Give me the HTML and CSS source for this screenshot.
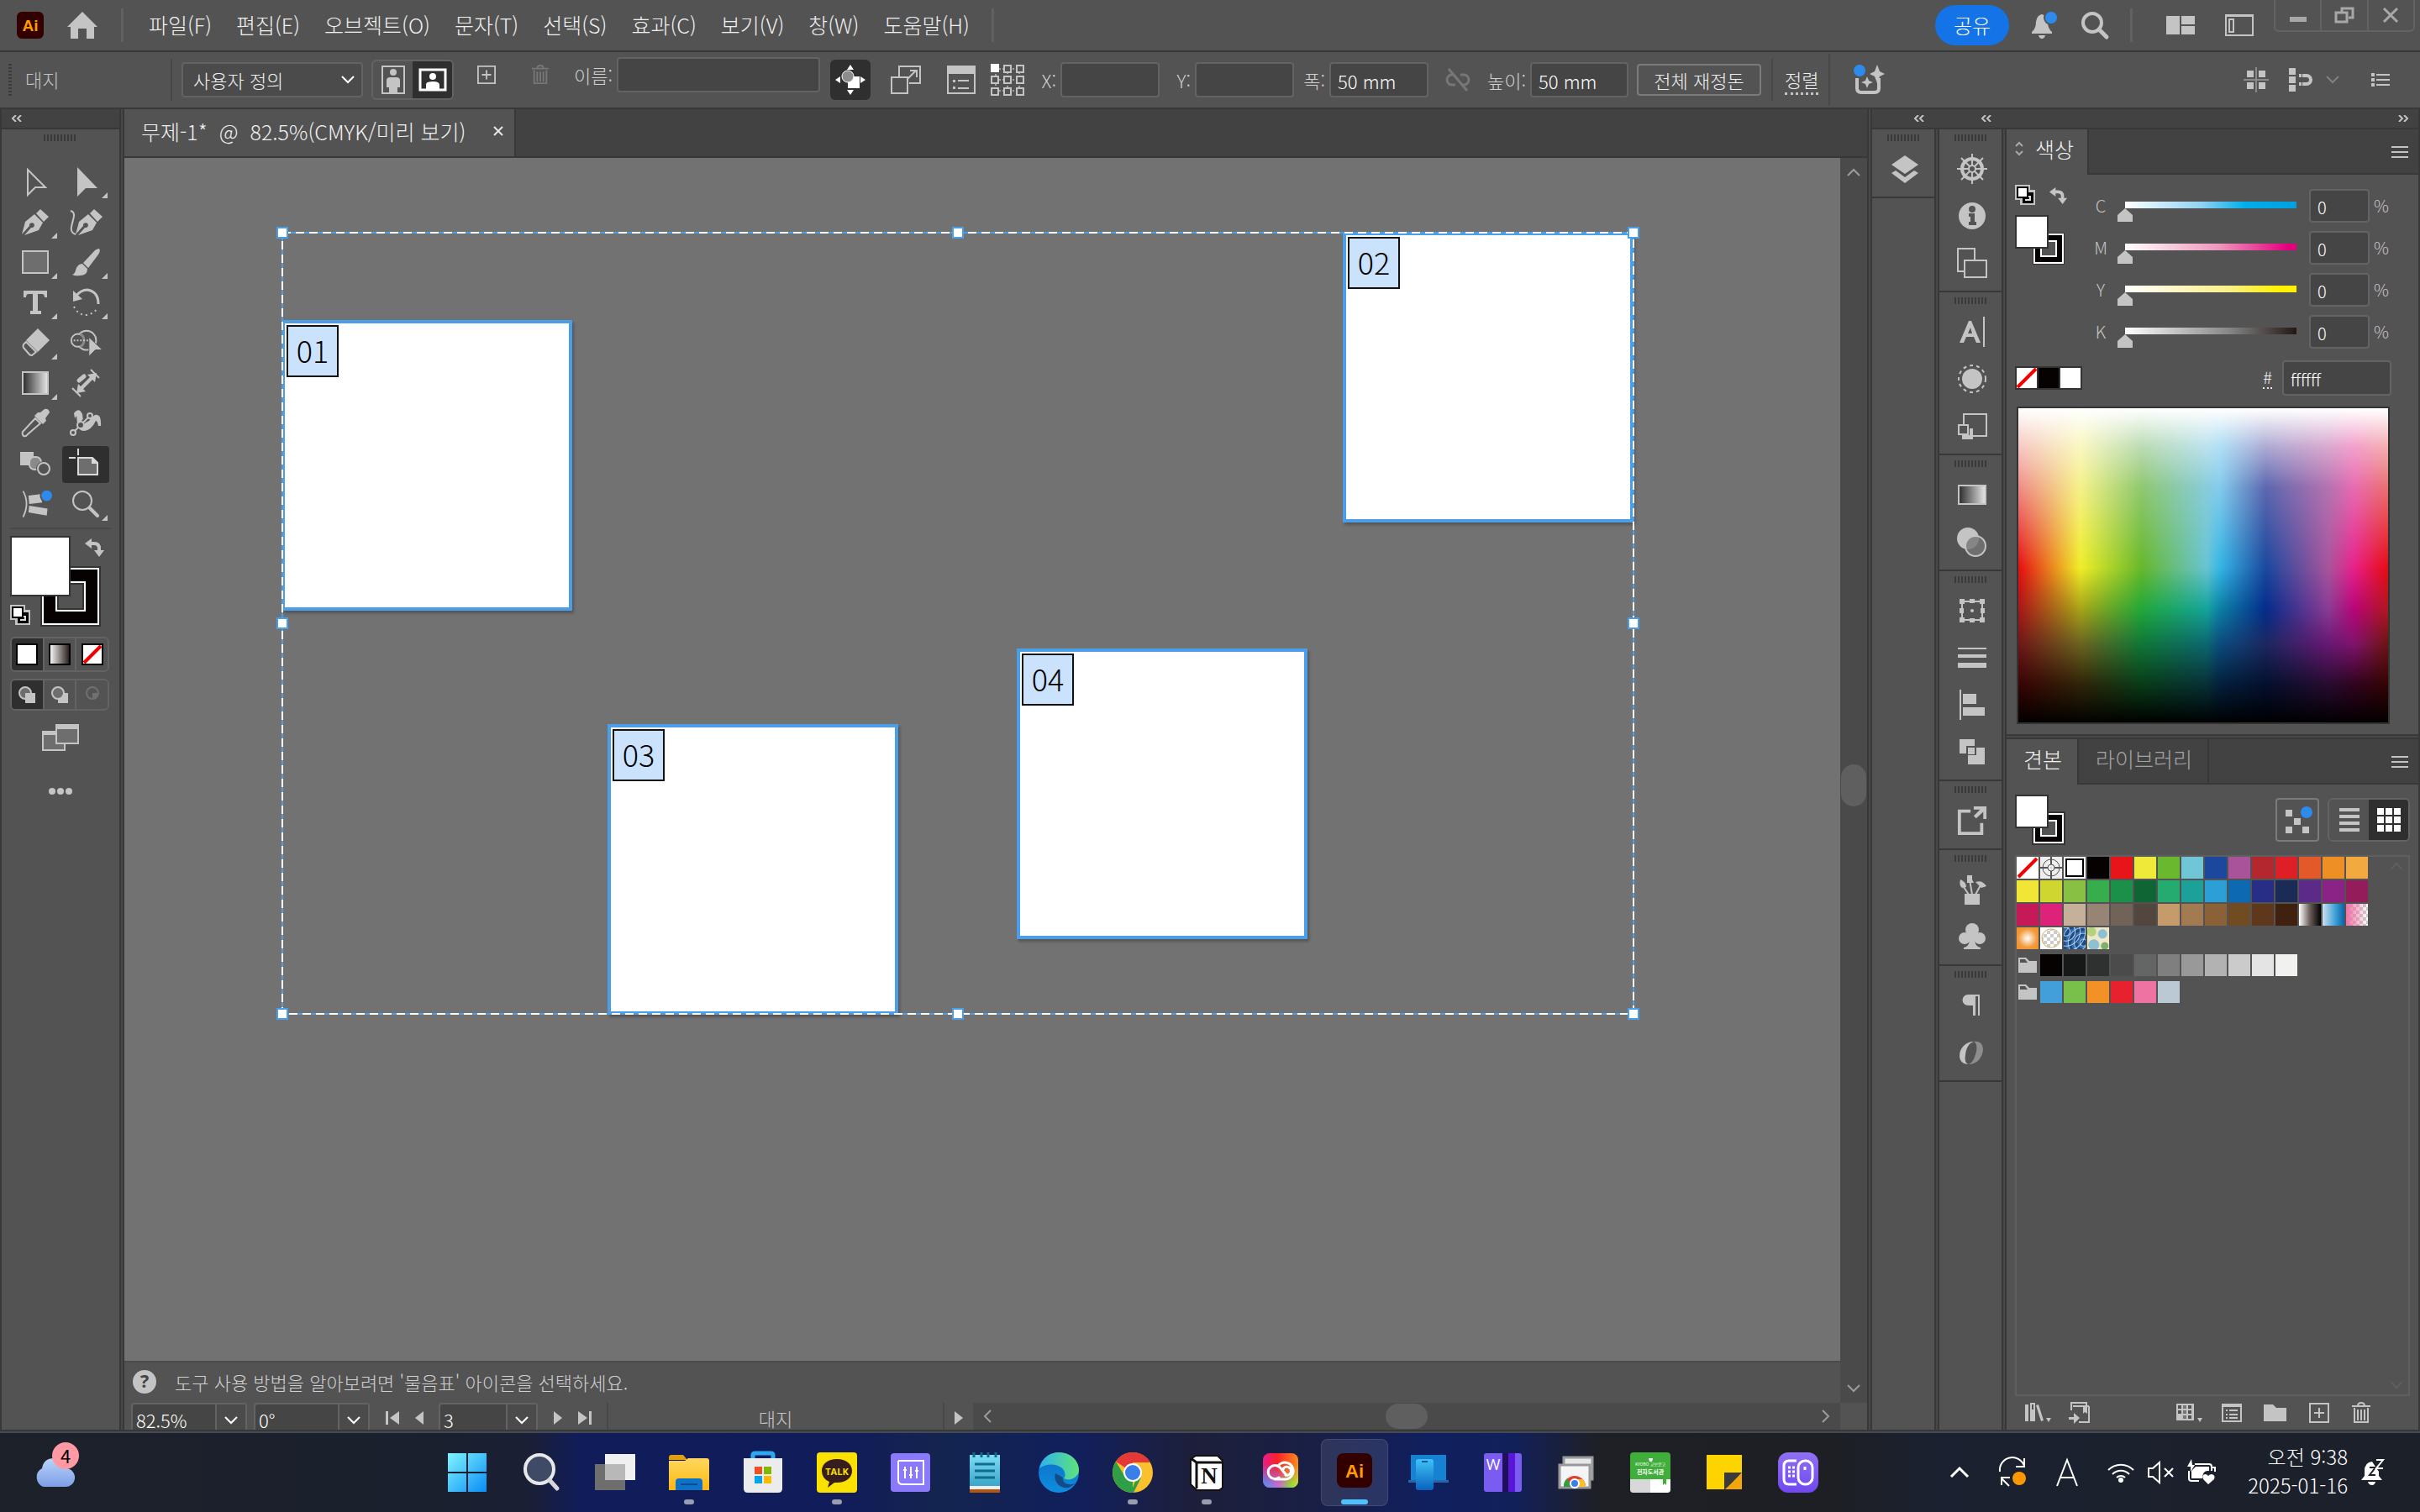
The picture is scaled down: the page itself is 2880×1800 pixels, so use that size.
FILE: index.html
```html
<!DOCTYPE html>
<html lang="ko">
<head>
<meta charset="utf-8">
<title>무제-1*</title>
<link rel="stylesheet" href="styles.css">
</head>
<body>
<svg class="defs" aria-hidden="true">
  <defs>
    <linearGradient id="gray"><stop offset="0" stop-color="#2b2b2b"/><stop offset="1" stop-color="#e8e8e8"/></linearGradient>
    <linearGradient id="fade"><stop offset="0" stop-color="#fff"/><stop offset="1" stop-color="#231815"/></linearGradient>
    <linearGradient id="win" x1="0" y1="0" x2="1" y2="1"><stop offset="0" stop-color="#7ff5ff"/><stop offset="1" stop-color="#0a8cf5"/></linearGradient>
    <linearGradient id="cloud" x1="0" y1="0" x2="0" y2="1"><stop offset="0" stop-color="#b9d4fa"/><stop offset="1" stop-color="#7f9fe6"/></linearGradient>
    <linearGradient id="folder" x1="0" y1="0" x2="0" y2="1"><stop offset="0" stop-color="#ffd75e"/><stop offset="1" stop-color="#fdb813"/></linearGradient>
    <linearGradient id="edge1" x1="0" y1="0" x2="1" y2="0"><stop offset="0" stop-color="#2fb1f0"/><stop offset="1" stop-color="#5fe37a"/></linearGradient>
    <linearGradient id="edge2" x1="0" y1="0" x2="0" y2="1"><stop offset="0" stop-color="#0b6fc4"/><stop offset="1" stop-color="#0e8de0"/></linearGradient>
    <linearGradient id="cc" x1="0" y1="0" x2="1" y2="0"><stop offset="0" stop-color="#ec1c8c"/><stop offset=".4" stop-color="#f5222a"/><stop offset="1" stop-color="#ff8a1c"/></linearGradient>
    <linearGradient id="cc2" x1="0" y1="0" x2="1" y2="0"><stop offset="0" stop-color="#4a90f8"/><stop offset=".45" stop-color="#c86ad0"/><stop offset=".8" stop-color="#8fdc3c"/><stop offset="1" stop-color="#c8e03c"/></linearGradient>
    <linearGradient id="ccfade" x1="0" y1="0" x2="0" y2="1"><stop offset=".3" stop-color="#000"/><stop offset=".8" stop-color="#fff"/></linearGradient>
    <mask id="ccmask"><rect width="48" height="48" fill="url(#ccfade)"/></mask>
    <linearGradient id="phone" x1="0" y1="0" x2="0" y2="1"><stop offset="0" stop-color="#3fc3f5"/><stop offset="1" stop-color="#0a62c0"/></linearGradient>
    <linearGradient id="violet" x1="0" y1="0" x2="0" y2="1"><stop offset="0" stop-color="#9070f4"/><stop offset="1" stop-color="#6f48f0"/></linearGradient>
    <linearGradient id="note" x1="0" y1="0" x2="0" y2="1"><stop offset="0" stop-color="#7fdcf6"/><stop offset="1" stop-color="#3aa6c8"/></linearGradient>
    <symbol id="swap" viewBox="0 0 24 24"><path d="M8 1 0 7l8 6V9h3q4 0 4 4v2h-4l6 8 6-8h-4v-2q0-8-8-8H8Z"/></symbol>
    <symbol id="defaults" viewBox="0 0 24 24"><path d="M0 0h18v6h6v18H6v-6H0Z"/><path d="M9 9h13v13H9Z" fill="#000"/><path d="M14 14h4v4h-6" fill="none" stroke="#ddd" stroke-width="2"/><path d="M3 3h12v12H3Z" fill="#fff" stroke="#000" stroke-width="2"/></symbol>
    <symbol id="menu" viewBox="0 0 20 14"><path d="M0 0h20v2H0Zm0 6h20v2H0Zm0 6h20v2H0Z"/></symbol>
    <symbol id="down" viewBox="0 0 16 10"><path d="m1 1 7 7 7-7" fill="none" stroke="currentColor" stroke-width="2"/></symbol>
    <symbol id="up" viewBox="0 0 16 10"><path d="m1 9 7-7 7 7" fill="none" stroke="currentColor" stroke-width="2"/></symbol>
    <symbol id="left" viewBox="0 0 10 16"><path d="M9 1 2 8l7 7" fill="none" stroke="currentColor" stroke-width="2"/></symbol>
    <symbol id="right" viewBox="0 0 10 16"><path d="m1 1 7 7-7 7" fill="none" stroke="currentColor" stroke-width="2"/></symbol>
    <symbol id="collapse" viewBox="0 0 12 8"><path d="M5 0 1 4l4 4m6-8L7 4l4 4" fill="none" stroke="currentColor" stroke-width="2"/></symbol>
    <symbol id="expand" viewBox="0 0 12 8"><path d="m1 0 4 4-4 4m6-8 4 4-4 4" fill="none" stroke="currentColor" stroke-width="2"/></symbol>
    <symbol id="plus" viewBox="0 0 24 24"><path d="M1 1h22v22H1Zm11 5v12m-6-6h12" fill="none" stroke="currentColor" stroke-width="2"/></symbol>
    <symbol id="trash" viewBox="0 0 24 26"><path d="M1 5h22M8 5q0-4 4-4t4 4M4 7v17h16V7M8 9v13m4-13v13m4-13v13" fill="none" stroke="currentColor" stroke-width="2"/></symbol>
    <symbol id="pen" viewBox="0 0 40 40"><path d="m26 4 10 9-6 6-9-10Z"/><path d="m19 10 10 10-5 9-17 6 8-9a3 3 0 1 0-2-2l-9 10 4-15Z"/></symbol>
  </defs>
</svg>

<header class="menubar">
  <svg class="logo" viewBox="0 0 32 32"><rect width="32" height="32" rx="6" fill="#330000"/><text x="16" y="23" class="ai-small">Ai</text></svg>
  <button class="home" aria-label="홈"><svg viewBox="0 0 36 32"><path d="M18 0 36 18h-4v14h-9V20h-10v12H4V18H0Z"/></svg></button>
  <i class="rule"></i>
  <nav class="menus">
    <a href="#">파일(F)</a><a href="#">편집(E)</a><a href="#">오브젝트(O)</a><a href="#">문자(T)</a><a href="#">선택(S)</a><a href="#">효과(C)</a><a href="#">보기(V)</a><a href="#">창(W)</a><a href="#">도움말(H)</a>
  </nav>
  <i class="rule"></i>
  <div class="top-actions">
    <button class="share">공유</button>
    <button class="top-icon" aria-label="알림"><svg width="32" height="34" viewBox="0 0 32 34"><path d="M13 4q6 1 7 9 0 8 5 12v2H1v-2q5-4 5-12 1-8 7-9ZM9 29h8q-1 4-4 4t-4-4Z"/><circle cx="24" cy="8" r="9" fill="#535353"/><circle cx="24" cy="8" r="7" fill="#2d8ceb"/></svg></button>
    <button class="top-icon" aria-label="검색"><svg width="34" height="34" viewBox="0 0 34 34"><circle cx="14" cy="14" r="11" fill="none" stroke="#c4c4c4" stroke-width="4"/><path d="m22 22 9 9" stroke="#c4c4c4" stroke-width="5" stroke-linecap="round"/></svg></button>
    <i class="rule"></i>
    <button class="top-icon wide" aria-label="작업 영역"><svg width="34" height="24" viewBox="0 0 34 24"><path d="M0 1h16v22H0Zm18 0h16v10H18Zm0 12h16v10H18Z"/></svg></button>
    <button class="top-icon wide" aria-label="문서"><svg width="34" height="28" viewBox="0 0 34 28"><path d="M1 2h32v24H1Z" fill="none" stroke="#c4c4c4" stroke-width="2"/><path d="M1 1h32v3H1Z"/><path d="M5 7h5v15H5Z" fill="none" stroke="#c4c4c4" stroke-width="2"/></svg></button>
  </div>
  <div class="window-buttons">
    <button aria-label="최소화"><svg width="20" height="24" viewBox="0 0 20 24"><path d="M0 14h20v6H0Z"/></svg></button>
    <button aria-label="이전 크기"><svg width="24" height="20" viewBox="0 0 24 20"><path d="M9 6V2h13v11h-5M2 7h13v11H2Z" fill="none" stroke="#a8a8a8" stroke-width="3"/></svg></button>
    <button aria-label="닫기"><svg width="20" height="16" viewBox="0 0 20 16"><path d="m2 0 16 16M18 0 2 16" stroke="#a8a8a8" stroke-width="3"/></svg></button>
  </div>
</header>

<section class="controlbar">
  <i class="vgrip"></i>
  <span class="mode">대지</span>
  <i class="divider"></i>
  <label class="preset"><select aria-label="사전 설정"><option>사용자 정의</option></select><svg width="16" height="10"><use href="#down"/></svg></label>
  <div class="pair orient">
    <button aria-label="세로"><svg width="28" height="34" viewBox="0 0 28 34"><path d="M1 1h26v32H1Z" fill="none" stroke="#c4c4c4" stroke-width="2"/><circle cx="14" cy="8" r="4"/><path d="M6 18q0-4 4-4h8q4 0 4 4v8h-3v7H9v-7H6Z"/></svg></button>
    <button class="on" aria-label="가로"><svg width="32" height="26" viewBox="0 0 32 26"><path d="M1 1h30v24H1Z" fill="none" stroke="#fff" stroke-width="3"/><circle cx="16" cy="9" r="4" fill="#fff"/><path d="M8 25v-6q0-4 8-4t8 4v6Z" fill="#fff"/></svg></button>
  </div>
  <div class="naming">
    <button class="slot" aria-label="새 대지"><svg width="24" height="22"><use href="#plus"/></svg></button>
    <button class="slot dim" aria-label="삭제"><svg width="22" height="26"><use href="#trash"/></svg></button>
    <label class="field name">이름:<input type="text"></label>
  </div>
  <button class="move" aria-label="이동"><svg width="36" height="36" viewBox="0 0 36 36" fill="#fff"><path d="m18 0 4 6h-8Zm0 36 4-6h-8ZM0 18l6-4v8Zm36 0-6-4v8Z" fill="#fff"/><path d="M15 14h14v14H15Z" fill="#fff"/><circle cx="15" cy="14" r="7" fill="#8c8c8c" stroke="#fff" stroke-width="1"/></svg></button>
  <div class="icons3">
    <button aria-label="크기"><svg width="36" height="34" viewBox="0 0 36 34"><path d="M10 14V1h25v20H22M1 14h19v19H1ZM20 16l10-10m-7 0h8v8" fill="none" stroke="#c4c4c4" stroke-width="2"/></svg></button>
    <button class="opts" aria-label="옵션"><svg width="34" height="34" viewBox="0 0 34 34"><path d="M1 1h32v32H1Z" fill="none" stroke="#c4c4c4" stroke-width="2"/><path d="M1 1h32v9H1Zm6 16h3v3H7Zm6 0h13v2H13ZM7 25h3v3H7Zm6 1h13v2H13Z"/></svg></button>
    <button class="anchor" aria-label="기준점"><svg width="40" height="38" viewBox="0 0 40 38"><path d="M6 6h28v26H6Zm0 13h28M20 6v26" stroke="#a0a0a0" stroke-width="2" stroke-dasharray="2 2" fill="none"/><path d="M16 2h8v8h-8ZM31 2h8v8h-8ZM1 15h8v8H1ZM16 15h8v8h-8ZM31 15h8v8h-8ZM1 29h8v8H1ZM16 29h8v8h-8ZM31 29h8v8h-8Z" fill="#535353" stroke="#c4c4c4" stroke-width="2"/><path d="M0 0h10v10H0Z" fill="#fff"/></svg></button>
  </div>
  <label class="field">X:<input type="text"></label>
  <label class="field">Y:<input type="text"></label>
  <label class="field">폭:<input type="text" value="50 mm"></label>
  <button class="link" aria-label="비율 유지"><svg width="30" height="28" viewBox="0 0 30 28"><path d="M12 20H8a6 6 0 0 1 0-12h3m7 0h4a6 6 0 0 1 0 12h-3M4 1l22 26" fill="none" stroke="#777" stroke-width="3"/></svg></button>
  <label class="field tall">높이:<input type="text" value="50 mm"></label>
  <button class="rearrange">전체 재정돈</button>
  <i class="divider gap"></i>
  <a href="#" class="align">정렬</a>
  <i class="divider full"></i>
  <button class="gen" aria-label="생성"><svg width="38" height="36" viewBox="0 0 38 36"><path d="M4 16v12q0 5 5 5h16q5 0 5-5V16" fill="none" stroke="#c4c4c4" stroke-width="4"/><path d="m28 0 3 8 6 3-6 3-3 8-3-8-6-3 6-3ZM16 14l2 5 5 2-5 2-2 5-2-5-5-2 5-2Z"/><circle cx="7" cy="7" r="7" fill="#2d8ceb"/></svg></button>
  <div class="control-right">
    <button aria-label="격자"><svg width="30" height="30" viewBox="0 0 30 30"><path d="M4 4h8v8H4Zm14 0h8v8h-8ZM4 18h8v8H4Zm14 0h8v8h-8Z"/><path d="M15 0v30M0 15h30" stroke="#8a8a8a" stroke-width="2"/></svg></button>
    <button class="snap" aria-label="스냅"><svg width="28" height="28" viewBox="0 0 28 28"><path d="M0 0h8v8H0Zm0 10h8v8H0Zm0 10h8v8H0Z"/><path d="M16 9h5a5 5 0 0 1 0 10h-5" fill="none" stroke="#c4c4c4" stroke-width="4"/><path d="M12 7h3v4h-3Zm0 10h3v4h-3Z"/></svg></button>
    <button class="dim" aria-label="스냅 옵션"><svg width="16" height="10"><use href="#down"/></svg></button>
    <button class="list" aria-label="메뉴"><svg width="22" height="16" viewBox="0 0 22 16"><path d="M0 0h4v4H0Zm0 6h4v4H0Zm0 6h4v4H0ZM6 1h16v2H6Zm0 6h16v2H6Zm0 6h16v2H6Z"/></svg></button>
  </div>
</section>

<main class="workspace">
  <aside class="toolbox">
    <div class="strip"><svg width="12" height="8"><use href="#collapse"/></svg></div>
    <i class="grip"></i>
    <div class="tools">
      <button class="tool" aria-label="선택"><svg viewBox="0 0 40 40"><path d="m11 5 21 21H20l-9 9Z" fill="none" stroke="#c4c4c4" stroke-width="2"/></svg></button>
      <button class="tool more" aria-label="직접 선택"><svg viewBox="0 0 40 40"><path d="m10 2 24 25H20L10 37Z"/></svg></button>
      <button class="tool more" aria-label="펜"><svg viewBox="0 0 40 40"><use href="#pen"/></svg></button>
      <button class="tool" aria-label="곡률"><svg viewBox="0 0 40 40"><use href="#pen" x="4"/><path d="M2 6c12 3-8 24 6 28" fill="none" stroke="#c4c4c4" stroke-width="2"/></svg></button>
      <button class="tool more" aria-label="사각형"><svg viewBox="0 0 40 40"><path d="M5 6h30v26H5Z" fill="#6e6e6e" stroke="#c4c4c4" stroke-width="2"/></svg></button>
      <button class="tool more" aria-label="페인트브러시"><svg viewBox="0 0 40 40"><path d="M36 3q2 2-1 7L23 26l-6-6L31 5q3-2 5-2ZM16 21l6 6q0 8-9 8-5 1-9-1 3-1 4-5 2-8 8-8Z"/></svg></button>
      <button class="tool more" aria-label="문자"><svg viewBox="0 0 40 40"><path d="M6 5h28v8h-3q0-4-3-4h-5v20h4v4H14v-4h3V9h-5q-3 0-3 4H6Z"/></svg></button>
      <button class="tool more" aria-label="회전"><svg viewBox="0 0 40 40"><path d="M8 12Q14 4 22 4q13 2 13 17" fill="none" stroke="#c4c4c4" stroke-width="3"/><path d="m5 5 11 10-11 3Z"/><path d="M6 24q5 10 14 10 9-1 14-8" fill="none" stroke="#c4c4c4" stroke-width="2" stroke-dasharray="2 4"/></svg></button>
      <button class="tool more" aria-label="지우개"><svg viewBox="0 0 40 40"><path d="m23 2 14 14-14 14L9 16Z"/><path d="m9 18 12 12-5 4q-2 0-3-1l-7-8q-1-2 0-4Z" fill="none" stroke="#c4c4c4" stroke-width="2"/></svg></button>
      <button class="tool" aria-label="도형 구성"><svg viewBox="0 0 42 40"><circle cx="22" cy="16" r="12" fill="none" stroke="#c4c4c4" stroke-width="2"/><circle cx="11" cy="16" r="8" fill="#535353" stroke="#c4c4c4" stroke-width="2"/><path d="M14 8a9 9 0 0 1 0 16" fill="none" stroke="#888" stroke-width="3"/><path d="M6 16h20" stroke="#c4c4c4" stroke-width="2" stroke-dasharray="2 2"/><path d="m25 12 17 16h-9l-8 8Z" stroke="#535353"/></svg></button>
      <button class="tool more" aria-label="그레이디언트"><svg viewBox="0 0 40 40"><path d="M5 6h30v26H5Z" fill="url(#gray)" stroke="#c4c4c4" stroke-width="2"/></svg></button>
      <button class="tool" aria-label="치수"><svg viewBox="0 0 40 40"><path d="M4 25l10 10M26 3l10 10" stroke="#c4c4c4" stroke-width="2"/><path d="m9 31 2-11 3 3 11-11-3-3 11-2-2 11-3-3-11 11 3 3Z"/><path d="m12 16 6-5" stroke="#c4c4c4" stroke-width="5" stroke-linecap="round"/></svg></button>
      <button class="tool" aria-label="스포이드"><svg viewBox="0 0 40 40"><path d="m26 6 5-4q5-1 6 4l-5 7 1 3-4 4-10-10 4-4Z"/><path d="m20 13 6 6-15 13q-2 3-5 2-2-2-1-5Z" fill="none" stroke="#c4c4c4" stroke-width="2"/></svg></button>
      <button class="tool" aria-label="퍼펫 뒤틀기"><svg viewBox="0 0 40 40"><path d="M6 7q6-8 10 1l1 8q5 4 9-3l5-4q8-2 7 13h-3q-1-6-3-6-5 11-14 12-7 0-8-9l-1-9-2 3Z"/><path d="M4 31 25 9" stroke="#535353" stroke-width="5"/><path d="M5 30 25 10" stroke="#c4c4c4" stroke-width="2"/><g fill="#535353" stroke="#c4c4c4" stroke-width="2"><circle cx="5" cy="30" r="3"/><circle cx="14" cy="21" r="4"/><circle cx="25" cy="10" r="3"/></g></svg></button>
      <button class="tool" aria-label="블렌드"><svg viewBox="0 0 40 40"><path d="M2 5h16v16H2Z"/><rect x="13" y="11" width="14" height="15" rx="6" fill="#8a8a8a" stroke="#c4c4c4" stroke-width="2"/><circle cx="30" cy="25" r="9" fill="#535353"/><circle cx="30" cy="25" r="7" fill="#535353" stroke="#c4c4c4" stroke-width="2"/></svg></button>
      <button class="tool on" aria-label="대지"><svg viewBox="0 0 40 40"><path d="M11 1v8M0 12h8" stroke="#dadada" stroke-width="2"/><path d="M11 12h17l6 6v14H11Z" fill="#6e6e6e" stroke="#dadada" stroke-width="2"/><path d="M27 12v7h7Z" fill="#dadada"/></svg></button>
      <button class="tool" aria-label="교차"><svg viewBox="0 0 44 40"><path d="M6 2q9 16 0 34" fill="none" stroke="#c4c4c4" stroke-width="2"/><path d="m13 8 16-2 2 11-17 2Zm1 13 24 4-1 9-24-4Z"/><circle cx="37" cy="8" r="9" fill="#535353"/><circle cx="37" cy="8" r="7" fill="#2d8ceb"/></svg></button>
      <button class="tool more" aria-label="돋보기"><svg viewBox="0 0 40 40"><circle cx="16" cy="15" r="11" fill="none" stroke="#c4c4c4" stroke-width="2"/><path d="m25 24 9 9" stroke="#c4c4c4" stroke-width="4" stroke-linecap="round"/></svg></button>
    </div>
    <div class="paint">
      <svg width="120" height="112" viewBox="0 0 120 112">
        <path d="M37 37h70v70H37Z" fill="none" stroke="#333" stroke-width="2"/>
        <path d="M39 39h66v66H39Z" fill="#060202" stroke="#fff" stroke-width="2"/>
        <path d="M55 55h34v34H55Z" fill="#535353" stroke="#fff" stroke-width="2"/><path d="M57 57h30v30H57Z" fill="none" stroke="#333" stroke-width="2"/>
        <path d="M1 1h70v70H1Z" fill="#fff" stroke="#333" stroke-width="2"/>
        <use href="#swap" x="89" y="2" width="24" height="24"/><use href="#defaults" x="0" y="82" width="24" height="24"/>
      </svg>
    </div>
    <div class="triple">
      <button class="on" aria-label="색상"><svg width="26" height="26"><path d="M1 1h24v24H1Z" fill="#fff" stroke="#000" stroke-width="2"/></svg></button>
      <button aria-label="그레이디언트"><svg width="26" height="26"><path d="M1 1h24v24H1Z" fill="url(#fade)" stroke="#000" stroke-width="2"/></svg></button>
      <button aria-label="없음"><svg width="26" height="26"><path d="M1 1h24v24H1Z" fill="#fff" stroke="#000" stroke-width="2"/><path d="M3 23 23 3" stroke="#f00000" stroke-width="4"/></svg></button>
    </div>
    <div class="triple low">
      <button class="on" aria-label="표준 그리기"><svg width="22" height="22"><circle cx="9" cy="9" r="7" fill="#6e6e6e" stroke="#c4c4c4" stroke-width="2"/><path d="M9 9h12v12H9Z"/></svg></button>
      <button aria-label="배경 그리기"><svg width="22" height="22"><path d="M9 9h12v12H9Z"/><circle cx="9" cy="9" r="7" fill="#6e6e6e" stroke="#c4c4c4" stroke-width="2"/></svg></button>
      <button aria-label="내부 그리기"><svg width="22" height="22"><circle cx="11" cy="9" r="7" fill="none" stroke="#707070" stroke-width="2"/><path d="M11 9h7q0 7-7 7Z" fill="#707070"/></svg></button>
    </div>
    <button class="screen" aria-label="화면 모드"><svg width="44" height="32"><path d="M1 9h26v22H1Z" fill="#6e6e6e" stroke="#c4c4c4" stroke-width="2"/><path d="M0 8h28v5H0Z"/><path d="M17 1h26v22H17Z" fill="#6e6e6e" stroke="#c4c4c4" stroke-width="2"/><path d="M16 0h28v6H16Z"/></svg></button>
    <button class="screen" aria-label="도구 편집"><svg width="30" height="8"><circle cx="5" cy="4" r="4"/><circle cx="15" cy="4" r="4"/><circle cx="25" cy="4" r="4"/></svg></button>
  </aside>
  <i class="gutter"></i>

  <section class="document">
    <div class="tabs"><div class="tab">무제-1*&nbsp; @ &nbsp;82.5%(CMYK/미리 보기)<button aria-label="닫기"><svg width="14" height="14"><path d="m2 2 10 10M12 2 2 12" stroke="#e6e6e6" stroke-width="2"/></svg></button></div></div>
    <div class="stage">
      <div class="canvas">
        <div class="board b1"><span>01</span></div>
        <div class="board b2"><span>02</span></div>
        <div class="board b3"><span>03</span></div>
        <div class="board b4"><span>04</span></div>
        <svg class="selection" viewBox="0 0 1620 942">
          <path d="M6 6h1608v930H6Z" fill="none" stroke="#4a9fe8" stroke-width="2"/>
          <path d="M6 6h1608v930H6Z" fill="none" stroke="#fff" stroke-width="2" stroke-dasharray="10 6"/>
          <path d="M0 0h12v12H0ZM804 0h12v12h-12ZM1608 0h12v12h-12ZM0 465h12v12H0ZM1608 465h12v12h-12ZM0 930h12v12H0ZM804 930h12v12h-12ZM1608 930h12v12h-12Z" fill="#fff" stroke="#4a9fe8" stroke-width="2"/>
        </svg>
      </div>
      <div class="hint"><svg width="30" height="30"><circle cx="15" cy="15" r="14"/><text x="15" y="22">?</text></svg>도구 사용 방법을 알아보려면 '물음표' 아이콘을 선택하세요.</div>
      <div class="vscroll"><svg width="16" height="10"><use href="#up"/></svg><i></i><svg width="16" height="10"><use href="#down"/></svg></div>
    </div>
    <div class="status">
      <div class="combo zoom"><input type="text" value="82.5%" aria-label="확대"><button aria-label="확대 목록"><svg width="16" height="10"><use href="#down"/></svg></button></div>
      <div class="combo angle"><input type="text" value="0°" aria-label="회전"><button aria-label="회전 목록"><svg width="16" height="10"><use href="#down"/></svg></button></div>
      <div class="pager"><svg width="16" height="16"><path d="M0 0h3v16H0Zm16 0v16L5 8Z"/></svg><svg width="10" height="16"><path d="M10 0v16L0 8Z"/></svg></div>
      <div class="combo page"><input type="text" value="3" aria-label="대지 번호"><button aria-label="대지 목록"><svg width="16" height="10"><use href="#down"/></svg></button></div>
      <div class="pager"><svg width="10" height="16"><path d="M0 0v16l10-8Z"/></svg><svg width="16" height="16"><path d="M13 0h3v16h-3ZM0 0v16l11-8Z"/></svg></div>
      <div class="state">대지</div>
      <button class="play" aria-label="상태 메뉴"><svg width="10" height="16"><path d="M0 0v16l10-8Z"/></svg></button>
      <div class="hscroll"><svg width="10" height="16"><use href="#left"/></svg><i></i><svg width="10" height="16"><use href="#right"/></svg></div>
    </div>
  </section>
  <i class="gutter"></i>

  <section class="dock">
    <div class="strips"><span><svg width="12" height="8"><use href="#collapse"/></svg></span><span><svg width="12" height="8"><use href="#collapse"/></svg></span><span class="end"><svg width="12" height="8"><use href="#expand"/></svg></span></div>
    <div class="columns">
      <div class="rail">
        <div class="group"><i class="grip"></i>
          <button aria-label="레이어"><svg viewBox="0 0 36 36"><path d="m18 2 16 11-16 11L2 13Z"/><path d="m2 23 5-3 11 8 11-8 5 3-16 12Z"/></svg></button></div>
      </div>
      <i class="gutter"></i>
      <div class="rail">
        <div class="group"><i class="grip"></i>
          <button aria-label="내비게이터"><svg viewBox="0 0 36 36"><g fill="none" stroke="#c4c4c4"><circle cx="18" cy="18" r="12" stroke-width="4"/><circle cx="18" cy="18" r="4" stroke-width="2"/><path d="M18 0v14m0 8v14M0 18h14m8 0h14M5 5l10 10m6 6 10 10M31 5 21 15m-6 6L5 31" stroke-width="2"/></g></svg></button>
          <button aria-label="정보"><svg viewBox="0 0 36 36"><circle cx="18" cy="18" r="16"/><g fill="#535353"><circle cx="18" cy="10" r="4"/><path d="M14 15h7v10h2v4h-9v-4h2v-6h-2Z"/></g></svg></button>
          <button aria-label="대지"><svg viewBox="0 0 36 36"><path d="M8 28H1V1h20v14" fill="none" stroke="#c4c4c4" stroke-width="2"/><path d="M9 15h26v20H9Z" fill="none" stroke="#c4c4c4" stroke-width="2"/></svg></button></div>
        <div class="group"><i class="grip"></i>
          <button aria-label="문자"><svg viewBox="0 0 36 36"><path d="M3 31 14 5h3l11 26h-5l-3-7h-9l-3 7Zm10-11h5l-2-7Z"/><path d="M31 0h2v36h-2Z"/></svg></button>
          <button aria-label="모양"><svg viewBox="0 0 36 36"><circle cx="18" cy="18" r="12"/><circle cx="18" cy="18" r="16" fill="none" stroke="#c4c4c4" stroke-width="2" stroke-dasharray="4 4"/></svg></button>
          <button aria-label="그래픽 스타일"><svg viewBox="0 0 36 36"><path d="M8 16V4h27v26H19" fill="none" stroke="#c4c4c4" stroke-width="2"/><path d="M2 17h11v11H2Z" fill="none" stroke="#c4c4c4" stroke-width="2"/><path d="M15 21h4v13H6v-5h9Z"/></svg></button></div>
        <div class="group"><i class="grip"></i>
          <button aria-label="그레이디언트"><svg viewBox="0 0 36 36"><path d="M2 7h32v22H2Z" fill="url(#gray)" stroke="#c4c4c4" stroke-width="2"/></svg></button>
          <button aria-label="투명도"><svg viewBox="0 0 36 36"><circle cx="13" cy="14" r="13"/><circle cx="22" cy="23" r="12" fill="#777" fill-opacity=".8" stroke="#c4c4c4" stroke-width="2"/></svg></button></div>
        <div class="group"><i class="grip"></i>
          <button aria-label="변형"><svg viewBox="0 0 36 36"><path d="M6 7h24v22H6Z" fill="none" stroke="#c4c4c4" stroke-width="2"/><path d="M3 4h6v6H3Zm12 0h6v5h-6Zm12 0h6v6h-6ZM3 15h5v6H3Zm25 0h5v6h-5ZM3 26h6v6H3Zm12 1h6v5h-6Zm12-1h6v6h-6Z"/><circle cx="18" cy="18" r="2"/></svg></button>
          <button aria-label="획"><svg viewBox="0 0 36 36"><path d="M1 6h34v2H1Zm0 8h34v4H1Zm0 10h34v6H1Z"/></svg></button>
          <button aria-label="정렬"><svg viewBox="0 0 36 36"><path d="M3 0h2v36H3Zm4 5h16v12H7Zm0 16h26v10H7Z"/></svg></button>
          <button aria-label="패스파인더"><svg viewBox="0 0 36 36"><path d="M3 3h18v8H11v9H3Zm20 10h10v20H13V22h10Z"/><path d="M13 13h8v8h-8Z"/></svg></button></div>
        <div class="group"><i class="grip"></i>
          <button aria-label="에셋 내보내기"><svg viewBox="0 0 38 36"><path d="M17 6H3v28h28V21" fill="none" stroke="#c4c4c4" stroke-width="4"/><path d="M21 0h16v16h-4V7L24 15l-3-3 8-8h-8Z"/></svg></button></div>
        <div class="group"><i class="grip"></i>
          <button aria-label="브러시"><svg viewBox="0 0 36 36"><path d="M9 23h18v13H9Z"/><path d="M14 24 6 12m12 12L15 6m7 18 7-13" stroke="#c4c4c4" stroke-width="2"/><path d="M4 6q7 3 7 9l-5 1q-4-3-2-10Zm8-5h6v5l2 4h-8Zm10 8q8-3 13 5l-6 2Z"/></svg></button>
          <button aria-label="심볼"><svg viewBox="0 0 36 36"><circle cx="18" cy="10" r="8"/><circle cx="9" cy="20" r="7"/><circle cx="27" cy="20" r="7"/><path d="M15 16h6q-1 14 7 15v2H8v-2q8-1 7-15Z"/></svg></button></div>
        <div class="group last"><i class="grip"></i>
          <button aria-label="단락"><svg viewBox="0 0 36 36"><path d="M13 5h14v25h-2V7h-3v23h-3V18h-6A6 6 0 0 1 13 5Z"/></svg></button>
          <button aria-label="OpenType"><svg viewBox="0 0 36 36"><path d="M20 5C10 5 3 13 3 22c0 6 4 10 11 10-4-1-5-5-4-11 1-9 4-14 10-16Z"/><path d="M20 5c7-1 11 3 11 10-1 9-7 17-17 17 5-2 7-8 9-15 1-7 0-10-3-12Z" fill="#8e8e8e"/></svg></button></div>
      </div>
      <i class="gutter"></i>
      <div class="panels">
        <section class="panel">
          <div class="panel-tabs"><span class="ptab on sort"><svg width="10" height="16"><path d="m1 5 4-4 4 4M1 11l4 4 4-4" fill="none" stroke="#a8a8a8" stroke-width="2"/></svg>색상</span><button class="pmenu" aria-label="메뉴"><svg width="20" height="14"><use href="#menu"/></svg></button></div>
          <div class="color-body">
            <div class="mixer">
              <svg width="64" height="100" viewBox="0 0 64 100"><use href="#defaults" x="0" y="0" width="24" height="24"/><use href="#swap" x="41" y="2" width="22" height="22"/><path d="M21 57h38v38H21Z" fill="#333"/><path d="M23 59h34v34H23Z" fill="#060202" stroke="#fff" stroke-width="2"/><path d="M31 67h18v18H31Z" fill="#535353" stroke="#fff" stroke-width="2"/><path d="M1 37h38v38H1Z" fill="#fff" stroke="#333" stroke-width="2"/></svg>
              <div class="sliders">
                <div class="slider"><label for="c">C</label><input id="c" type="range" value="0" class="cyan"><input type="text" value="0" aria-label="C 값"><span>%</span></div>
                <div class="slider"><label for="m">M</label><input id="m" type="range" value="0" class="magenta"><input type="text" value="0" aria-label="M 값"><span>%</span></div>
                <div class="slider"><label for="y">Y</label><input id="y" type="range" value="0" class="yellow"><input type="text" value="0" aria-label="Y 값"><span>%</span></div>
                <div class="slider"><label for="k">K</label><input id="k" type="range" value="0" class="black"><input type="text" value="0" aria-label="K 값"><span>%</span></div>
              </div>
            </div>
            <div class="hexrow"><svg width="80" height="28"><path d="M0 0h80v28H0Z" fill="#333"/><path d="M2 2h24v24H2ZM54 2h24v24H54Z" fill="#fff"/><path d="M28 2h24v24H28Z" fill="#060202"/><path d="M3 25 25 3" stroke="#f00000" stroke-width="4"/></svg>
              <label for="hex">#</label><input id="hex" type="text" value="ffffff"></div>
            <canvas id="spectrum" width="220" height="187"></canvas>
          </div>
        </section>
        <section class="panel swatches">
          <div class="panel-tabs"><span class="ptab on">견본</span><span class="ptab">라이브러리</span><button class="pmenu" aria-label="메뉴"><svg width="20" height="14"><use href="#menu"/></svg></button></div>
          <div class="swatch-head">
            <svg width="60" height="60" viewBox="0 0 60 60"><path d="M20 20h40v40H20Z" fill="#333"/><path d="M23 23h34v34H23Z" fill="#060202" stroke="#fff" stroke-width="2"/><path d="M31 31h18v18H31Z" fill="#535353" stroke="#fff" stroke-width="2"/><path d="M1 1h38v38H1Z" fill="#fff" stroke="#333" stroke-width="2"/></svg>
            <button class="boxed" aria-label="색상 찾기"><svg width="36" height="36"><path d="M4 6h8v8H4Zm10 10h8v8h-8ZM4 26h8v8H4Zm20 0h8v8h-8Z"/><circle cx="29" cy="9" r="7" fill="#2d8ceb"/></svg></button>
            <div class="pair view"><button aria-label="목록"><svg width="24" height="28"><path d="M0 0h24v4H0Zm0 8h24v4H0Zm0 8h24v4H0Zm0 8h24v4H0Z"/></svg></button><button class="on" aria-label="격자"><svg width="28" height="28"><path fill="#fff" d="M0 0h8v8H0Zm10 0h8v8h-8Zm10 0h8v8h-8ZM0 10h8v8H0Zm10 0h8v8h-8Zm10 0h8v8h-8ZM0 20h8v8H0Zm10 0h8v8h-8Zm10 0h8v8h-8Z"/></svg></button></div>
          </div>
          <div class="swatch-list">
            <div class="grid" id="main-swatches">
              <svg class="sw" viewBox="0 0 26 26"><path d="M0 0h26v26H0Z" fill="#fff"/><path d="M2 24 24 2" stroke="#f00000" stroke-width="4"/></svg>
              <svg class="sw" viewBox="0 0 26 26"><path d="M0 0h26v26H0Z" fill="#eee"/><g fill="none" stroke="#555"><circle cx="13" cy="13" r="10"/><circle cx="13" cy="13" r="4"/><path d="M13 0v9m0 8v9M0 13h9m8 0h9" stroke-width="2"/></g><circle cx="13" cy="13" r="1"/></svg>
              <svg class="sw" viewBox="0 0 26 26"><path d="M0 0h26v26H0Z" fill="#fff"/><path d="M3 3h20v20H3Z" fill="#fff" stroke="#000" stroke-width="2"/></svg>
            </div>
            <div class="grid" id="gray-swatches"><svg class="sw" viewBox="0 0 26 26"><path d="M2 4h9l4 4h9v14H2Z"/><path d="M4 6h6l3 4H4Z" fill="#535353"/></svg></div>
            <div class="grid" id="bright-swatches"><svg class="sw" viewBox="0 0 26 26"><path d="M2 4h9l4 4h9v14H2Z"/><path d="M4 6h6l3 4H4Z" fill="#535353"/></svg></div>
            <span class="faint"><svg width="16" height="10"><use href="#up"/></svg><svg width="16" height="10"><use href="#down"/></svg></span>
          </div>
          <div class="panel-foot">
            <button aria-label="견본 라이브러리"><svg width="32" height="24"><path d="M0 2h4v20H0Zm6-2h6v22H6Zm7 3 3-1 6 19-3 1Z"/><path d="M25 18h6l-3 5Z"/><path d="M8 2h2v6H8Z" fill="#535353"/></svg></button>
            <button aria-label="라이브러리 추가"><svg width="28" height="26"><path d="M3 10V1h18v3M24 5v19H12M5 5h19" fill="none" stroke="#c4c4c4" stroke-width="2"/><path d="M0 18h6v-5l7 6-7 7v-5H0ZM17 5h5v9l-3-2-2 2Z"/></svg></button>
            <button class="push" aria-label="견본 종류"><svg width="32" height="22"><path d="M0 0h21v20H0Z"/><path d="M2 2h4v4H2Zm12 0h4v4h-4ZM2 8h4v4H2Zm12 0h4v4h-4Zm0 6h4v4h-4Z" fill="#535353"/><path d="M8 2h4v4H8Zm0 6h4v4H8Zm0 6h4v4H8Z" fill="#777"/><path d="M25 17h6l-3 5Z"/></svg></button>
            <button aria-label="견본 옵션"><svg width="24" height="22"><path d="M1 1h22v20H1Z" fill="none" stroke="#c4c4c4" stroke-width="2"/><path d="M1 0h22v4H1Zm4 7h2v2H5Zm4 0h10v2H9Zm-4 5h2v2H5Zm4 0h10v2H9Zm-4 4h2v2H5Zm4 0h10v2H9Z"/></svg></button>
            <button aria-label="새 색상 그룹"><svg width="28" height="22"><path d="M0 1h11l4 4h12v16H0Z"/></svg></button>
            <button aria-label="새 견본"><svg width="24" height="24"><use href="#plus"/></svg></button>
            <button aria-label="견본 삭제"><svg width="24" height="26"><use href="#trash"/></svg></button>
          </div>
        </section>
      </div>
    </div>
  </section>
</main>

<footer class="taskbar">
  <div class="weather"><svg width="48" height="36" viewBox="0 0 48 36"><path d="M12 35a12 12 0 0 1-2-22Q12 1 24 1t15 12a11 11 0 0 1-2 22Z" fill="url(#cloud)"/></svg><b>4</b></div>
  <nav class="apps">
    <button aria-label="시작"><svg viewBox="0 0 48 48"><path d="M1 1h22v22H1Zm24 0h22v22H25ZM1 25h22v22H1Zm24 0h22v22H25Z" fill="url(#win)"/></svg></button>
    <button aria-label="검색"><svg viewBox="0 0 48 48"><circle cx="22" cy="20" r="17" fill="#3e4a66" stroke="#e8e8ea" stroke-width="4"/><path d="m34 33 9 10" stroke="#d8d8dc" stroke-width="5" stroke-linecap="round"/></svg></button>
    <button aria-label="작업 보기"><svg viewBox="0 0 48 48"><path d="M12 2h36v31H12Z" fill="#f0f0f0"/><path d="M0 14h36v31H0Z" fill="#6e6e6e"/><path d="M12 14h24v19H12Z" fill="#b8b8b8"/></svg></button>
    <button class="run" aria-label="탐색기"><svg viewBox="0 0 48 48"><path d="M0 6q0-3 3-3h14l5 6H0Z" fill="#e09f10"/><path d="M0 10h19l4-3h22q3 0 3 3v35H0Z" fill="url(#folder)"/><path d="M8 45V35q0-4 4-4h24q4 0 4 4v10Z" fill="#0f72c6"/><path d="M14 38h20" stroke="#0a4f94" stroke-width="2"/></svg></button>
    <button aria-label="스토어"><svg viewBox="0 0 48 48"><path d="M12 10V3q0-2 3-2h18q3 0 3 2v7" fill="none" stroke="#2fa8f0" stroke-width="5"/><path d="M1 7h46v36q0 5-5 5H6q-5 0-5-5Z" fill="#ececec"/><path d="M14 17h9v9h-9Z" fill="#f25022"/><path d="M25 17h9v9h-9Z" fill="#7fba00"/><path d="M14 28h9v9h-9Z" fill="#00a4ef"/><path d="M25 28h9v9h-9Z" fill="#ffb900"/></svg></button>
    <button class="run" aria-label="카카오톡"><svg viewBox="0 0 48 48"><rect width="48" height="48" rx="4" fill="#fae100"/><path d="M24 8c11 0 18 6 18 14s-7 14-18 14h-3l-8 6 2-7q-9-4-9-13C6 14 13 8 24 8Z" fill="#371d1e"/><text x="24" y="27" class="talk">TALK</text></svg></button>
    <button aria-label="설정 앱"><svg viewBox="0 0 48 48"><rect y="1" width="47" height="46" rx="4" fill="#8b79fb"/><path d="M9 10h30v28H14M9 10v23q0 5 5 5" fill="none" stroke="#fff" stroke-width="2"/><path d="M17 17v14m7-14v14m7-14v14M15 21h4m3 6h4m3-5h4" stroke="#fff" stroke-width="2"/></svg></button>
    <button aria-label="메모장"><svg viewBox="0 0 48 48"><path d="M6 3h36v37H6Z" fill="url(#note)"/><path d="M6 40h36v4H6Z" fill="#eee"/><path d="M6 44h36v4H6Z" fill="#b55610"/><path d="M12 14h24M12 22h24M12 30h24" stroke="#0f6d8e" stroke-width="3"/><path d="M11 0v6m9-6v6m8-6v6m9-6v6" stroke="#0f6d8e" stroke-width="3"/></svg></button>
    <button aria-label="Edge"><svg viewBox="0 0 48 48"><circle cx="24" cy="24" r="24" fill="url(#edge2)"/><path d="M1 19C4 6 14 0 24 0c14 0 24 10 24 21 0 9-11 14-18 10 3-3 2-12-7-15-8-3-17-1-22 3Z" fill="url(#edge1)"/><path d="M20 25c-3 10 6 19 16 17l8-5c-8 3-16 0-15-7-3-2-7-4-9-5Z" fill="#134b86"/></svg></button>
    <button class="run" aria-label="Chrome"><svg viewBox="0 0 48 48"><circle cx="24" cy="24" r="24" fill="#fbc02d"/><path d="M24 24 4 11A24 24 0 0 1 45 12H24Z" fill="#e53935"/><path d="M24 24v24A24 24 0 0 1 4 11l11 18Z" fill="#2e9e47"/><path d="M34 30 25 48h-3l5-14Z" fill="#2e9e47"/><circle cx="24" cy="24" r="11" fill="#fff"/><circle cx="24" cy="24" r="9" fill="#3a7fe8"/></svg></button>
    <button class="run" aria-label="Notion"><svg viewBox="0 0 48 48"><path d="m5 8 6-4 26 0 6 6v32l-4 3-27 0-7-7Z" fill="#fff" stroke="#111" stroke-width="2"/><path d="M12 12h30M12 12v31M5 7l7 5" stroke="#111" stroke-width="3"/><text x="27" y="37" class="notion">N</text></svg></button>
    <button aria-label="Creative Cloud"><svg viewBox="0 0 48 48"><rect x="3" y="1" width="42" height="41" rx="8" fill="url(#cc)"/><rect x="3" y="1" width="42" height="41" rx="8" fill="url(#cc2)" mask="url(#ccmask)"/><path d="M22 30a8 8 0 1 1-2-14q3 1 5 4l5 6M22 15a10 10 0 1 1 8 17H17M30 27a5 5 0 1 0-3-7" fill="none" stroke="#fff" stroke-width="3" stroke-linecap="round"/></svg></button>
    <button class="run active" aria-label="Illustrator"><svg viewBox="0 0 48 48"><rect x="3" y="1" width="42" height="41" rx="8" fill="#330000"/><text x="24" y="30" class="ai-task">Ai</text></svg></button>
    <button aria-label="휴대폰과 연결"><svg viewBox="0 0 48 48"><path d="M3 3h42v31H3Z" fill="#1683d2"/><path d="M0 33h48v3H0Z" fill="#2567a8"/><rect x="9" y="8" width="21" height="37" rx="3" fill="url(#phone)"/><path d="M16 11h7" stroke="#0b5a9e" stroke-width="2"/></svg></button>
    <button aria-label="문서 앱"><svg viewBox="0 0 48 48"><rect x="2" y="1" width="45" height="46" rx="3" fill="#7a5cf0"/><path d="M24 1h7v46h-7Z" fill="#20105c"/><path d="M31 1h8v46h-8Z" fill="#5a17d8"/><text x="13" y="21" class="dub">W</text></svg></button>
    <button aria-label="Chrome 앱"><svg viewBox="0 0 48 48"><path d="M9 6h34v26H9Z" fill="#e8e8e8" stroke="#999" stroke-width="3"/><path d="M4 15h36v27H4Z" fill="#f5f5f5" stroke="#999" stroke-width="3"/><path d="M9 41a13 13 0 0 1 26 0Z" fill="#e04030"/><path d="M9 41q0-7 4-10l5 10Z" fill="#2e9e47"/><path d="M35 41q0-6-4-9H22v9Z" fill="#fbc02d"/><circle cx="22" cy="37" r="5" fill="#3a7fe8" stroke="#fff" stroke-width="2"/></svg></button>
    <button aria-label="전자도서관"><svg viewBox="0 0 48 48"><rect width="48" height="48" rx="4" fill="#3fae3a"/><path d="M0 32h24v16H4q-4 0-4-4Z" fill="#d8d8d8"/><path d="M24 32h24v12q0 4-4 4H24Z" fill="#fff"/><path d="M39 32h4v7l-2-2-2 2Z" fill="#3fae3a"/><path d="M22 7h5l-1 4h-3Z" fill="#fff"/><text x="24" y="26" class="lib">전자도서관</text><text x="24" y="16" class="kyobo">KYOBO 교보문고</text></svg></button>
    <button aria-label="메모"><svg viewBox="0 0 48 48"><path d="M3 3h42v41H3Z" fill="#fdd400"/><path d="M24 44V24h21L26 44Z" fill="#3a3a38"/><path d="M45 25v19H25Z" fill="#f2a60c"/></svg></button>
    <button aria-label="원격"><svg viewBox="0 0 48 48"><rect width="48" height="48" rx="12" fill="url(#violet)"/><g fill="none" stroke="#fff" stroke-width="3"><path d="M22 10H13q-6 0-6 6v16q0 6 6 6h9"/><rect x="24" y="10" width="17" height="28" rx="8"/><path d="M32 17v4"/><path d="M12 18h8m-8 5h8m-8 5h8" stroke-dasharray="3 2"/></g></svg></button>
  </nav>
  <div class="tray">
    <span class="w64"><svg width="24" height="14"><path d="m2 12 10-10 10 10" fill="none" stroke="#fff" stroke-width="3"/></svg></span>
    <span class="w64"><svg width="34" height="34"><path d="M1 16A15 15 0 0 1 30 9m0-9v10H20M3 32v-9h10M3 24l9 9" fill="none" stroke="#fff" stroke-width="2"/><circle cx="24" cy="24" r="8" fill="#ff9800"/></svg></span>
    <span class="w64 ime"><svg width="26" height="34"><path d="M1 33 13 2l12 31M5 23h16" fill="none" stroke="#fff" stroke-width="2"/></svg></span>
    <span class="w48"><svg width="34" height="26"><path d="M2 10a21 21 0 0 1 30 0M7 15a14 14 0 0 1 20 0M12 19a7 7 0 0 1 10 0" fill="none" stroke="#fff" stroke-width="2"/><circle cx="17" cy="22" r="3" fill="#fff"/></svg></span>
    <span class="w48"><svg width="32" height="26"><path d="M1 8h5l8-7v24l-8-7H1Zm19 0 10 10m0-10L20 18" fill="none" stroke="#fff" stroke-width="2"/></svg></span>
    <span class="w48"><svg width="34" height="32"><path d="M9 6h17q3 0 3 3v5M14 26H5q-3 0-3-3v-9m28-4h3v5" fill="none" stroke="#fff" stroke-width="2"/><path d="M10 9h16v5q-8-1-8 9H5v-9Z" fill="#fff"/><path d="M5 0 0 9h4v6l5-8H6Z" fill="#fff"/><path d="m25 30-6-6q-2-5 2-6 3 0 4 2 2-2 4-2 5 1 3 6Z" fill="#fff"/></svg></span>
    <time>오전 9:38<br>2025-01-16</time>
    <span class="w60"><svg width="30" height="34"><path d="M14 4q-9 1-9 11v6l-4 5h25l-4-5v-5ZM9 28h9q-1 4-4 4-4 0-5-4Z" fill="#fff"/><path d="M11 11h7l-7 9h7" fill="none" stroke="#1c2029" stroke-width="2"/><path d="M19 2h8l-8 10h8" fill="none" stroke="#fff" stroke-width="2"/></svg></span>
  </div>
</footer>
<script src="app.js"></script>
</body>
</html>
```

FILE: styles.css
```css
:root {
  --bg: #535353;
  --dark: #424242;
  --line: #383838;
  --edge: #636363;
  --field: #454545;
  --icon: #c4c4c4;
  --on: #2f2f2f;
  --blue: #4a9fe8;
}
* { box-sizing: border-box; }
body {
  margin: 0;
  height: 100vh;
  display: grid;
  grid-template-rows: 62px 68px minmax(0, 1fr) 96px;
  background: var(--bg);
  color: #f0f0f0;
  font: 300 22px/28px "Noto Sans CJK KR", "Noto Sans", sans-serif;
  overflow: hidden;
}
button, input, select { font: inherit; color: inherit; }
button {
  display: flex;
  align-items: center;
  justify-content: center;
  padding: 0;
  border: 0;
  background: none;
}
a { color: inherit; text-decoration: none; }
svg { display: block; flex: none; fill: var(--icon); overflow: visible; }
.defs { position: absolute; width: 0; height: 0; }
i { display: block; flex: none; }
input[type="text"] {
  min-width: 0;
  padding: 2px 0 0 8px;
  border: 2px solid var(--edge);
  border-radius: 4px;
  background: var(--field);
  color: #fff;
  outline: 0;
}

/* menu bar */
.menubar {
  display: flex;
  align-items: center;
  border-bottom: 2px solid var(--line);
  padding-left: 20px;
}
.logo { width: 32px; height: 32px; }
.ai-small { font: bold 19px "Liberation Sans", sans-serif; fill: #ff9a00; text-anchor: middle; }
.home { margin: 0 28px; }
.home svg { width: 36px; height: 32px; }
.rule { width: 3px; height: 40px; background: #616161; }
.menus { display: flex; gap: 29px; margin: 0 26px 0 30px; padding-bottom: 2px; font-size: 25px; white-space: nowrap; }
.top-actions { display: flex; align-items: center; margin-left: auto; }
.share {
  width: 88px;
  height: 48px;
  margin-right: 12px;
  border-radius: 24px;
  background: #1473e6;
  color: #fff;
  font-size: 24px;
}
.top-icon { width: 60px; height: 48px; }
.top-icon + .rule { margin: 0 22px 0 12px; }
.top-icon.wide { width: 70px; }
.window-buttons {
  align-self: flex-start;
  display: flex;
  width: 168px;
  height: 38px;
  margin: 0 6px;
  border: 2px solid var(--edge);
  border-top: 0;
  border-radius: 0 0 6px 6px;
}
.window-buttons button { flex: 1; }
.window-buttons button + button { border-left: 2px solid var(--edge); }
.window-buttons svg { fill: #a8a8a8; }

/* control bar */
.controlbar {
  display: flex;
  align-items: center;
  padding-left: 10px;
  border-bottom: 2px solid var(--line);
  white-space: nowrap;
}
.vgrip { width: 4px; height: 38px; background: repeating-linear-gradient(#3a3a3a 0 2px, transparent 2px 4px); }
.mode { width: 189px; padding: 0 0 2px 16px; color: var(--icon); }
.divider { width: 2px; height: 50px; background: #484848; }
.divider.gap { margin: 0 14px 0 12px; }
.divider.full { height: 62px; margin-left: 12px; }
.preset { position: relative; width: 216px; margin: 0 10px 0 11px; }
.preset select {
  width: 100%;
  height: 42px;
  padding-left: 12px;
  appearance: none;
  border: 2px solid var(--edge);
  border-radius: 4px;
  background: #4b4b4b;
}
.preset svg { position: absolute; right: 10px; top: 16px; color: #fff; }
.pair { display: flex; overflow: hidden; border: 2px solid var(--edge); border-radius: 6px; }
.pair button { flex: 1; }
.pair .on { background: var(--on); }
.orient { width: 98px; height: 48px; }
.naming { display: flex; align-items: center; padding-bottom: 12px; }
.slot { width: 64px; padding-left: 14px; color: var(--icon); }
.slot.dim { color: #777; }
.field { display: flex; align-items: center; justify-content: flex-end; gap: 5px; width: 160px; color: #d0d0d0; }
.field input { width: 118px; height: 42px; }
.field.name { width: 308px; }
.field.name input { width: 242px; }
.field.tall { width: 168px; }
.move { width: 48px; height: 48px; margin-left: 12px; border-radius: 6px; background: var(--on); }
.icons3 { display: flex; align-items: center; width: 184px; padding-left: 24px; }
.icons3 .opts { margin-left: 31px; }
.icons3 .anchor { margin-left: 18px; }
.link { width: 70px; }
.rearrange {
  width: 148px;
  height: 38px;
  margin-left: 10px;
  border: 2px solid #7b7b7b;
  border-radius: 4px;
}
.align { border-bottom: 3px dotted #c4c4c4; line-height: 32px; }
.gen { margin-left: 28px; }
.control-right { display: flex; align-items: center; margin-left: auto; padding-right: 36px; }
.control-right .snap { margin: 0 16px 0 24px; }
.control-right .dim { color: #808080; }
.control-right .list { margin-left: 38px; }

/* workspace */
.workspace {
  display: grid;
  grid-template-columns: 140px 6px minmax(0, 1fr) 6px 650px;
  min-height: 0;
  border: 2px solid var(--line);
  border-top: 0;
}
.gutter { width: 6px; background: #484848; border: solid var(--line); border-width: 0 2px; }
.grip { width: 38px; height: 8px; background: repeating-linear-gradient(90deg, #3a3a3a 0 2px, transparent 2px 4px); }

/* toolbox */
.toolbox { display: flex; flex-direction: column; }
.strip {
  display: flex;
  align-items: center;
  height: 24px;
  padding-left: 12px;
  border-bottom: 2px solid var(--line);
  background: var(--dark);
  color: var(--icon);
}
.toolbox .grip { margin: 6px 0 25px 50px; }
.tools {
  display: grid;
  grid-template-columns: 56px 56px;
  grid-auto-rows: 44px;
  gap: 4px;
  margin: 2px 0 5px 12px;
}
.tool { position: relative; border-radius: 4px; }
.tool svg { width: 40px; height: 40px; }
.tool.on { background: var(--on); }
.tool.more::after {
  content: "";
  position: absolute;
  right: 2px;
  bottom: 3px;
  width: 7px;
  height: 7px;
  background: var(--icon);
  clip-path: polygon(100% 0, 100% 100%, 0 100%);
}
.paint { width: 120px; margin: 0 0 8px 10px; padding-top: 8px; border-top: 2px solid #494949; }
.triple { display: flex; width: 118px; height: 42px; margin: 0 0 8px 10px; overflow: hidden; border: 2px solid var(--edge); border-radius: 6px; }
.triple.low { height: 38px; margin-bottom: 16px; }
.triple button { flex: 1; }
.triple button + button { border-left: 2px solid var(--edge); }
.triple .on { background: var(--on); }
.screen { align-self: flex-start; width: 120px; margin: 0 0 44px 10px; }

/* document */
.document { display: grid; grid-template-rows: 58px minmax(0, 1fr) 32px; min-height: 0; }
.tabs { display: flex; background: var(--dark); border-bottom: 2px solid var(--line); }
.tab {
  display: flex;
  align-items: center;
  gap: 32px;
  padding: 0 12px 4px 20px;
  border-right: 2px solid var(--line);
  background: var(--bg);
  font-size: 25px;
  white-space: nowrap;
}
.stage { display: grid; grid-template: minmax(0, 1fr) 50px / minmax(0, 1fr) 32px; min-height: 0; }
.canvas { position: relative; overflow: hidden; background: #727272; }
.board {
  position: absolute;
  width: 346px;
  height: 346px;
  border: 4px solid var(--blue);
  background: #fff;
  box-shadow: 2px 3px 3px rgba(0, 0, 0, .25);
}
.board span {
  display: block;
  width: 62px;
  height: 62px;
  margin: 2px;
  border: 2px solid #111;
  background: #cbe2fd;
  color: #000;
  font-size: 36px;
  line-height: 54px;
  text-align: center;
}
.b1 { left: 187px; top: 193px; }
.b2 { left: 1450px; top: 88px; }
.b3 { left: 575px; top: 674px; }
.b4 { left: 1062px; top: 584px; }
.selection { position: absolute; left: 182px; top: 83px; width: 1620px; height: 942px; }
.hint {
  display: flex;
  align-items: center;
  gap: 21px;
  padding: 0 0 2px 9px;
  border-top: 2px solid #4a4a4a;
  color: #d0d0d0;
}
.hint text { font: bold 22px "Noto Sans", sans-serif; fill: #444; text-anchor: middle; }
.vscroll {
  grid-area: 1 / 2 / 3 / 3;
  display: flex;
  flex-direction: column;
  align-items: center;
  justify-content: space-between;
  padding: 12px 0;
  background: #4a4a4a;
  color: #9c9c9c;
}
.vscroll i { width: 30px; height: 50px; margin-top: 12px; border-radius: 15px; background: #5f5f5f; }
.status { display: flex; min-height: 0; }
.combo { display: flex; width: 138px; height: 32px; margin-left: 8px; border: 2px solid var(--edge); border-bottom: 0; border-radius: 4px 4px 0 0; background: var(--field); }
.combo input[type="text"] { flex: 1; padding: 6px 0 0 4px; border: 0; background: none; line-height: 24px; }
.combo button { width: 36px; border-left: 2px solid var(--edge); background: #4b4b4b; color: #fff; padding-top: 8px; }
.combo.page { width: 118px; margin: 0; }
.pager { display: flex; justify-content: center; gap: 19px; width: 82px; padding-top: 10px; }
.state { width: 402px; padding-top: 4px; border: solid #484848; border-width: 0 2px; color: var(--icon); text-align: center; }
.play { align-items: flex-start; width: 34px; padding-top: 10px; }
.hscroll {
  flex: 1;
  display: flex;
  align-items: center;
  justify-content: space-between;
  margin-right: 32px;
  padding: 0 12px;
  background: #4a4a4a;
  color: #9c9c9c;
}
.hscroll i { width: 50px; height: 30px; border-radius: 15px; background: #5f5f5f; }

/* dock */
.dock { display: grid; grid-template-rows: 24px minmax(0, 1fr); min-height: 0; }
.strips { display: flex; background: var(--dark); border-bottom: 2px solid var(--line); color: var(--icon); }
.strips span { display: flex; align-items: center; justify-content: flex-end; width: 80px; padding-right: 18px; }
.strips .end { flex: 1; padding-right: 12px; }
.columns { display: flex; min-height: 0; }
.rail { width: 74px; }
.group { display: flex; flex-direction: column; align-items: center; padding: 6px 0 5px; border-bottom: 2px solid var(--line); }
.group .grip { margin-bottom: 5px; }
.group button { width: 56px; height: 56px; padding-left: 4px; }
.group svg { width: 36px; height: 36px; }
.panels { flex: 1; display: flex; flex-direction: column; gap: 2px; min-width: 0; background: #484848; }
.panel { border-bottom: 2px solid var(--line); background: var(--bg); }
.panel-tabs { display: flex; height: 54px; background: var(--dark); box-shadow: inset 0 -2px var(--line); }
.ptab {
  display: flex;
  align-items: center;
  gap: 14px;
  padding: 0 18px 8px;
  border-right: 2px solid var(--line);
  color: #a4a4a4;
  font-size: 25px;
}
.ptab.on { background: var(--bg); color: #f0f0f0; }
.ptab.sort { padding-left: 10px; padding-right: 16px; }
.pmenu { margin-left: auto; padding-right: 12px; }
.color-body { padding: 12px 10px; }
.mixer { display: flex; }
.sliders { flex: 1; margin-left: 28px; }
.slider { display: grid; grid-template-columns: 30px minmax(0, 1fr) 72px 48px; align-items: center; height: 50px; color: var(--icon); font-size: 20px; }
.slider label { width: 20px; text-align: center; }
.slider input[type="text"] { height: 40px; }
.slider span { padding-left: 5px; }
.slider input[type="range"] {
  width: calc(100% - 6px);
  height: 24px;
  margin: 14px 0 0;
  appearance: none;
  background: var(--ramp) 9px 0 / calc(100% - 18px) 8px no-repeat;
}
.slider input::-webkit-slider-thumb {
  appearance: none;
  width: 18px;
  height: 16px;
  margin-top: 8px;
  background: var(--icon);
  clip-path: polygon(50% 0, 100% 50%, 100% 100%, 0 100%, 0 50%);
}
.cyan { --ramp: linear-gradient(90deg, #fff, #8fd2f2 45%, #00aeea 70%, #00a0e0); }
.magenta { --ramp: linear-gradient(90deg, #fff, #ee96ba 55%, #e4007f 95%); }
.yellow { --ramp: linear-gradient(90deg, #fff, #faf08a 60%, #fff000 90%); }
.black { --ramp: linear-gradient(90deg, #fff, #888 60%, #231815); }
.hexrow { display: flex; align-items: center; height: 64px; padding-bottom: 4px; }
.hexrow label { margin-left: auto; border-bottom: 2px dotted #e8e8e8; line-height: 24px; font-size: 20px; }
.hexrow input { width: 130px; height: 42px; margin: 0 22px 0 12px; font-size: 20px; }
#spectrum { display: block; width: calc(100% - 26px); height: 378px; margin-left: 2px; border: 2px solid #333; }
.swatches { flex: 1; display: flex; flex-direction: column; min-height: 0; border: 0; border-top: 2px solid var(--line); }
.swatches .ptab { padding: 0 18px 8px 20px; }
.swatch-head { display: flex; align-items: center; gap: 10px; padding: 12px 10px; }
.boxed { width: 52px; height: 52px; margin-left: auto; border: 2px solid #7b7b7b; border-radius: 4px; }
.boxed + .pair { width: 98px; height: 52px; }
.swatch-head button { margin-top: 0; }
.swatch-list { position: relative; flex: 1; margin: 0 10px; border: 2px solid #5f5f5f; }
.grid { display: flex; flex-wrap: wrap; gap: 2px; width: 430px; margin-bottom: 6px; }
#main-swatches { width: 420px; }
.sw { width: 26px; height: 26px; }
.faint { position: absolute; right: 6px; top: 6px; bottom: 6px; display: flex; flex-direction: column; justify-content: space-between; color: #5f5f5f; }
.g-black { background: linear-gradient(90deg, #fff, #6a5d58 50%, #000); }
.g-blue { background: linear-gradient(90deg, #cfe0f0, #3a9fd4 60%, #0d62a8); }
.g-pink { background: linear-gradient(90deg, #ee72a4, rgba(238, 114, 164, 0)), repeating-conic-gradient(#ccc 0 25%, #fff 0 50%) 0 0 / 8px 8px; }
.g-orange { background: radial-gradient(circle, #fff, #f39a3c 60%, #f18f28); }
.g-ring { background: radial-gradient(circle, transparent 10px, #d9b860 11px, #fff 12px), repeating-conic-gradient(#ccc 0 25%, #fff 0 50%) 0 0 / 8px 8px; }
.p-wave { background: repeating-radial-gradient(circle at 10% 20%, transparent 0 4px, rgba(228, 238, 248, .8) 5px, transparent 6px), repeating-radial-gradient(circle at 90% 70%, #1d4b86 0 3px, #9fc0e0 4px, #2f6db0 5px 7px); }
.p-leaf { background: radial-gradient(circle at 20% 20%, #b4d27c 5px, transparent 6px), radial-gradient(circle at 70% 30%, #8fbfd2 5px, transparent 6px), radial-gradient(circle at 30% 80%, #8fbfd2 6px, transparent 7px), radial-gradient(circle at 80% 85%, #7db06c 4px, transparent 5px), #efe8c8; }
.panel-foot { display: flex; align-items: center; height: 40px; padding: 0 56px 0 22px; color: var(--icon); }
.panel-foot button { margin-right: 26px; }
.panel-foot .push { margin-left: auto; margin-right: 22px; }
.panel-foot button:first-child { margin-right: 20px; }
.panel-foot button:last-child { margin-right: 0; }

/* taskbar */
.taskbar {
  display: flex;
  align-items: center;
  border-top: 2px solid #454b54;
  background: linear-gradient(90deg, #1c212a 0, #1b202e 500px, #1b1f35 630px, #101d5a 690px, #111c5a 1000px, #14244f 1120px, #111f5c 1280px, #1d1f3a 1420px, #191f45 1560px, #101f5e 1700px, #12205a 1800px, #1e2026 1900px, #1e1f24 2180px, #1b2130 2300px, #1c2029 2880px);
}
.weather { position: relative; width: 512px; padding-left: 40px; }
.weather b {
  position: absolute;
  left: 62px;
  top: -18px;
  width: 32px;
  height: 32px;
  border-radius: 16px;
  background: #ff99a4;
  color: #000;
  font-weight: 400;
  font-size: 22px;
  line-height: 30px;
  text-align: center;
}
.apps { display: flex; }
.apps button { position: relative; width: 80px; height: 80px; margin: 0 4px; border-radius: 8px; }
.apps svg { width: 48px; height: 48px; }
.apps .active { background: rgba(255, 255, 255, .1); box-shadow: inset 0 0 0 1px rgba(255, 255, 255, .1); }
.apps .run::after { content: ""; position: absolute; bottom: 2px; width: 12px; height: 6px; border-radius: 3px; background: #9a9db0; }
.apps .active::after { width: 32px; background: #4cc2ff; }
.ai-task { font: bold 22px "Liberation Sans", sans-serif; fill: #ff9a00; text-anchor: middle; }
.talk { font: bold 11px "Open Sans", sans-serif; fill: #fae100; text-anchor: middle; }
.notion { font: bold 27px "Liberation Serif", serif; fill: #111; text-anchor: middle; }
.dub { font: 18px "Open Sans", sans-serif; fill: #fff; text-anchor: middle; }
.lib { font: bold 7px "Noto Sans CJK KR", sans-serif; fill: #fff; text-anchor: middle; }
.kyobo { font: 5px "Noto Sans CJK KR", sans-serif; fill: #fff; text-anchor: middle; }
.tray { display: flex; align-items: center; margin-left: auto; padding-right: 26px; }
.tray span { display: flex; justify-content: center; }
.w64 { width: 64px; }
.w48 { width: 48px; }
.w60 { width: 60px; }
.tray .ime { margin-right: 8px; }
.tray time { width: 150px; padding-bottom: 4px; color: #fff; font-size: 24px; line-height: 34px; text-align: right; white-space: nowrap; }
```

FILE: app.js
```js
// Swatch colours, in the order in which the panel lists them.
const swatches = {
  "main-swatches": ["#060202", "#e71419", "#efea3a", "#69b82d", "#70c6d6", "#1b489c", "#a8539a",
    "#b5272e", "#de1f26", "#e35929", "#ed8f24", "#f2aa40",
    "#f1e636", "#d0d630", "#88c044", "#37ad4b", "#1b9048", "#106535", "#25ab70", "#1ba198", "#2b9fd6", "#0d6ab2", "#282d86", "#1c2a56", "#5c2a88", "#8b2386", "#941c5a",
    "#c61957", "#de2179", "#c5b09a", "#988474", "#716357", "#52463f", "#c59b6c", "#a37b52", "#8b6238", "#714c22", "#5f371a", "#40200e",
    ".g-black", ".g-blue", ".g-pink", ".g-orange", ".g-ring", ".p-wave", ".p-leaf"],
  "gray-swatches": ["#060202", "#171918", "#2f3130", "#4b4b4b", "#646665", "#7f7f7f", "#999", "#b2b2b2", "#cbcbcb", "#e4e4e4", "#f1f1ef"],
  "bright-swatches": ["#439fd9", "#79c04a", "#f29126", "#e7212d", "#ee73a2", "#bac9d3"],
};
for (const [id, list] of Object.entries(swatches)) {
  const grid = document.getElementById(id);
  for (const value of list) {
    const cell = document.createElement("span");
    cell.className = "sw";
    if (value[0] === ".") cell.classList.add(value.slice(1));
    else cell.style.background = value;
    grid.append(cell);
  }
}

// CMYK spectrum: a mesh of colours, blended between its points.
const xs = [0, .166, .333, .51, .545, .67, .84, .91, 1];
const ys = [0, .12, .25, .51, .64, .75, .88, 1];
const mesh = [
  "ffffff ffffff ffffff ffffff ffffff ffffff ffffff ffffff ffffff",
  "f6cac4 faf8c2 bcdcb4 bce2ee b0dff6 aeacd4 daa9d0 f4a0cc f2b0b0",
  "ef8e88 f6f28a 90c870 88ccdc 84ccee 5d68b0 b573b0 e86cb2 ec7070",
  "e61012 f0ee28 66b82a 68c4d4 34b6e6 1a489e a8549c e8208a e60c14",
  "a81818 a8a418 22a83a 14a49c 0c80a4 042c8c 8a3c94 b80478 b01820",
  "701818 6c6420 107838 0c6870 0c4c80 1c2860 681874 80146c 701414",
  "380404 302408 083c18 083038 04203c 04102e 280c30 300420 340404",
  "040000 040300 000300 000303 000204 000003 030003 040002 040000",
].map(row => row.split(" ").map(c => [0, 2, 4].map(i => parseInt(c.substr(i, 2), 16))));
const canvas = document.getElementById("spectrum");
const ctx = canvas.getContext("2d");
const image = ctx.createImageData(canvas.width, canvas.height);
const find = (stops, t) => {
  let i = 0;
  while (i < stops.length - 2 && t > stops[i + 1]) i++;
  return [i, (t - stops[i]) / (stops[i + 1] - stops[i])];
};
for (let y = 0; y < canvas.height; y++) {
  const [r, v] = find(ys, y / (canvas.height - 1));
  for (let x = 0; x < canvas.width; x++) {
    const [c, u] = find(xs, x / (canvas.width - 1));
    const p = (y * canvas.width + x) * 4;
    for (let k = 0; k < 3; k++) {
      const top = mesh[r][c][k] * (1 - u) + mesh[r][c + 1][k] * u;
      const low = mesh[r + 1][c][k] * (1 - u) + mesh[r + 1][c + 1][k] * u;
      image.data[p + k] = top * (1 - v) + low * v;
    }
    image.data[p + 3] = 255;
  }
}
ctx.putImageData(image, 0, 0);
```
